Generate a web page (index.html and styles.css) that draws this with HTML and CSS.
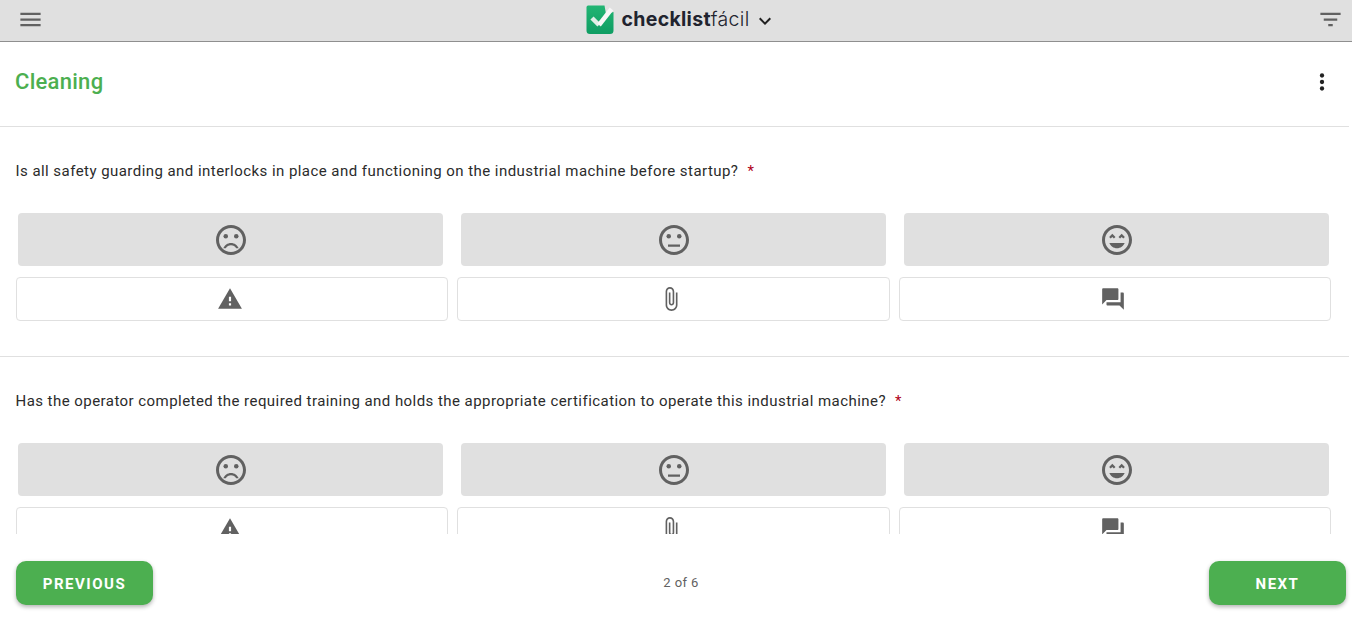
FILE: index.html
```html
<!DOCTYPE html>
<html lang="en">
<head>
<meta charset="utf-8">
<title>Cleaning</title>
<link rel="stylesheet" href="styles.css">
</head>
<body>
<svg class="sprites" width="0" height="0" aria-hidden="true">
  <symbol id="i-sad" viewBox="0 0 24 24"><circle cx="15.5" cy="9.5" r="1.5"/><circle cx="8.5" cy="9.5" r="1.5"/><path d="M11.99 2C6.47 2 2 6.48 2 12s4.47 10 9.99 10C17.52 22 22 17.52 22 12S17.52 2 11.99 2zM12 20c-4.42 0-8-3.58-8-8s3.58-8 8-8 8 3.58 8 8-3.58 8-8 8zm0-6c-2.33 0-4.32 1.45-5.12 3.5h1.67c.69-1.19 1.97-2 3.45-2s2.75.81 3.45 2h1.67c-.8-2.05-2.79-3.5-5.12-3.5z"/></symbol>
  <symbol id="i-neutral" viewBox="0 0 24 24"><path d="M8 15h8v1.500H8z"/><circle cx="15.500" cy="9.500" r="1.500"/><circle cx="8.500" cy="9.500" r="1.500"/><path d="M11.99 2C6.47 2 2 6.48 2 12s4.47 10 9.99 10C17.52 22 22 17.52 22 12S17.52 2 11.99 2zM12 20c-4.42 0-8-3.58-8-8s3.58-8 8-8 8 3.58 8 8-3.58 8-8 8z"/></symbol>
  <symbol id="i-happy" viewBox="0 0 24 24"><path d="M11.99 2C6.47 2 2 6.47 2 12s4.47 10 9.99 10S22 17.53 22 12 17.51 2 11.99 2zM12 20c-4.42 0-8-3.58-8-8s3.58-8 8-8 8 3.58 8 8-3.58 8-8 8zm1-10.06L14.06 11l1.06-1.06L16.18 11l1.06-1.06-2.12-2.12zm-4.12 0L9.94 11 11 9.94 8.88 7.82 6.76 9.94 7.82 11zM12 17.5c2.33 0 4.31-1.46 5.11-3.5H6.89c.8 2.04 2.78 3.5 5.11 3.5z"/></symbol>
  <symbol id="i-warn" viewBox="0 0 24 24"><path d="M1 21h22L12 2 1 21zm12-3h-2v-2h2v2zm0-4h-2v-4h2v4z"/></symbol>
  <symbol id="i-clip" viewBox="0 0 24 24"><path d="M16.5 6v11.5c0 2.21-1.79 4-4 4s-4-1.79-4-4V5c0-1.38 1.12-2.5 2.5-2.5s2.5 1.12 2.5 2.5v10.5c0 .55-.45 1-1 1s-1-.45-1-1V6H10v9.5c0 1.38 1.12 2.5 2.5 2.5s2.5-1.12 2.5-2.5V5c0-2.21-1.79-4-4-4S7 2.79 7 5v12.5c0 3.04 2.46 5.5 5.5 5.5s5.5-2.46 5.5-5.5V6h-1.5z"/></symbol>
  <symbol id="i-forum" viewBox="0 0 24 24"><path d="M21 6h-2v9H6v2c0 .55.45 1 1 1h11l4 4V7c0-.55-.45-1-1-1zm-4 6V3c0-.55-.45-1-1-1H3c-.55 0-1 .45-1 1v14l4-4h10c.55 0 1-.45 1-1z"/></symbol>
</svg>

<div class="app">
  <header class="topbar">
    <svg class="icon bar-icon" viewBox="0 0 24 24"><path d="M3 18h18v-2H3v2zm0-5h18v-2H3v2zm0-7v2h18V6H3z"/></svg>
    <div class="brand">
      <svg class="logo-mark" viewBox="0 0 30 30">
        <defs>
          <linearGradient id="logo-green" x1="0" y1="0" x2="0" y2="1">
            <stop offset="0" stop-color="#22b573"/>
            <stop offset="1" stop-color="#0f9d63"/>
          </linearGradient>
        </defs>
        <path fill="url(#logo-green)" d="M3 0.500H19.500L21 9L28.500 7V25.500a3.500 3.500 0 0 1-3.500 3.500H5a3.500 3.500 0 0 1-3.500-3.500V2a2 2 0 0 1 1.500-1.500z"/>
        <path class="logo-check-short" d="M7 13L14 20"/>
        <path class="logo-check-long" d="M14 20L26.500 4"/>
      </svg>
      <span class="wordmark"><b>checklist</b>fácil</span>
      <svg class="chevron" viewBox="0 0 24 24"><path d="M16.59 8.59 12 13.17 7.41 8.59 6 10l6 6 6-6z"/></svg>
    </div>
    <svg class="icon bar-icon" viewBox="0 0 24 24"><path d="M10 18h4v-2h-4v2zM3 6v2h18V6H3zm3 7h12v-2H6v2z"/></svg>
  </header>

  <main class="content">
    <section class="title-row">
      <h1>Cleaning</h1>
      <svg class="icon more" viewBox="0 0 24 24"><circle cx="12" cy="6" r="2"/><circle cx="12" cy="12" r="2"/><circle cx="12" cy="18" r="2"/></svg>
    </section>

    <section class="question">
      <p class="label">Is all safety guarding and interlocks in place and functioning on the industrial machine before startup?<span class="req">*</span></p>
      <div class="answers">
        <button class="answer"><svg class="face"><use href="#i-sad"/></svg></button>
        <button class="answer"><svg class="face"><use href="#i-neutral"/></svg></button>
        <button class="answer"><svg class="face"><use href="#i-happy"/></svg></button>
      </div>
      <div class="tools">
        <button class="tool"><svg class="tool-icon"><use href="#i-warn"/></svg></button>
        <button class="tool"><svg class="tool-icon"><use href="#i-clip"/></svg></button>
        <button class="tool"><svg class="tool-icon"><use href="#i-forum"/></svg></button>
      </div>
    </section>

    <section class="question">
      <p class="label">Has the operator completed the required training and holds the appropriate certification to operate this industrial machine?<span class="req">*</span></p>
      <div class="answers">
        <button class="answer"><svg class="face"><use href="#i-sad"/></svg></button>
        <button class="answer"><svg class="face"><use href="#i-neutral"/></svg></button>
        <button class="answer"><svg class="face"><use href="#i-happy"/></svg></button>
      </div>
      <div class="tools">
        <button class="tool"><svg class="tool-icon"><use href="#i-warn"/></svg></button>
        <button class="tool"><svg class="tool-icon"><use href="#i-clip"/></svg></button>
        <button class="tool"><svg class="tool-icon"><use href="#i-forum"/></svg></button>
      </div>
    </section>
  </main>

  <footer class="pager">
    <button class="nav">Previous</button>
    <span class="count">2 of 6</span>
    <button class="nav">Next</button>
  </footer>
</div>
</body>
</html>
```

FILE: styles.css
```css
* { box-sizing: border-box; }
html, body { margin: 0; height: 100%; overflow: hidden; }
body { font-family: Roboto, "Liberation Sans", sans-serif; background: #fff; color: #212121; }
.sprites { position: absolute; }
.app { display: flex; flex-direction: column; height: 625px; }

.topbar {
  flex: none; height: 42px; padding: 0 8px 2px 17px;
  display: flex; align-items: center; justify-content: space-between;
  background: #e0e0e0; border-bottom: 1px solid #8f8f8f;
}
.icon { width: 24px; height: 24px; fill: #616161; display: block; }
.bar-icon { width: 27px; height: 27px; }
.brand { display: flex; align-items: center; height: 36px; }
.logo-mark { width: 30px; height: 30px; display: block; margin-right: 7px; }
.logo-check-short, .logo-check-long { fill: none; stroke-width: 4.5; }
.logo-check-short { stroke: #dfeee6; }
.logo-check-long { stroke: #f7f7f7; }
.wordmark { font-family: Inter, sans-serif; font-size: 19.5px; letter-spacing: 0.3px; color: #20232e; font-weight: 300; margin-bottom: 1px; }
.wordmark b { font-weight: 700; }
.chevron { width: 24px; height: 24px; fill: #212121; margin-left: 3px; margin-top: 2px; }

.content { flex: none; height: 492px; overflow: hidden; width: 1349px; }
.title-row {
  height: 85px; padding: 0 14px 5px 15px;
  display: flex; align-items: center; justify-content: space-between;
  border-bottom: 1px solid #e0e0e0;
}
h1 { margin: 0; font-size: 22px; font-weight: 500; color: #4caf50; line-height: 32px; letter-spacing: 0.275px; }
.more { fill: #212121; width: 26px; height: 26px; }

.question { height: 230px; padding: 0 16px; border-bottom: 1px solid #e0e0e0; }
.label { margin: 0 0 0 -0.5px; padding-top: 34px; height: 86px; font-size: 15px; line-height: 20px; letter-spacing: 0.45px; color: #2b2b2b; }
.req { color: #b00020; margin-left: 9px; }

.answers { display: grid; grid-template-columns: repeat(3, 425px); column-gap: 18px; padding-left: 2px; }
.answer {
  height: 53px; padding: 0; border: 0; border-radius: 4px; background: #e0e0e0;
  display: flex; align-items: center; justify-content: center;
}
.face { width: 36px; height: 36px; fill: #616161; }

.tools { display: grid; grid-template-columns: 432px 433px 432px; column-gap: 9px; margin-top: 11px; }
.tool {
  height: 44px; padding: 0 5px 0 0; border: 1px solid #e0e0e0; border-radius: 4px; background: #fff;
  display: flex; align-items: center; justify-content: center;
}
.tool-icon { width: 26px; height: 26px; fill: #616161; }

.pager {
  flex: 1; display: flex; align-items: flex-start; justify-content: space-between;
  padding: 27px 6px 0 16px;
}
.nav {
  width: 137px; height: 44px; border: 0; border-radius: 10px; background: #4caf50; color: #fff;
  font: 700 15px/44px Roboto, sans-serif; letter-spacing: 1.5px; text-transform: uppercase;
  box-shadow: 0 2px 4px rgba(0,0,0,.3);
}
.count { font-size: 13px; line-height: 44px; letter-spacing: 0.4px; color: #616161; }
```
